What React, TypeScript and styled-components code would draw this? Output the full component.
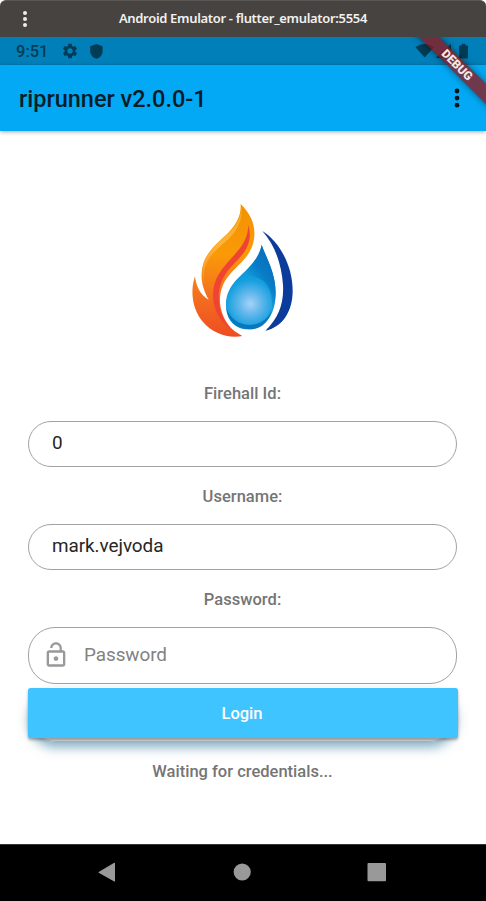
import React from 'react';
import styled, { createGlobalStyle } from 'styled-components';

const GlobalStyle = createGlobalStyle`
  * { box-sizing: border-box; }
  html, body { margin: 0; padding: 0; background: #fff; }
  body { font-family: Roboto, "Liberation Sans", sans-serif; }
  button, input { font: inherit; }
`;

const Window = styled.div`
  width: 486px;
  height: 901px;
  display: flex;
  flex-direction: column;
  overflow: hidden;
  background: #fff;
`;

const TitleBar = styled.header`
  height: 37px;
  flex: none;
  display: grid;
  grid-template-columns: 50px 1fr 50px;
  align-items: center;
  justify-items: center;
  background: #474340;
  border-top: 1px solid #5b5754;
  border-radius: 6px 6px 0 0;
`;

const WindowTitle = styled.h1`
  margin: 0 0 2px;
  color: #f2f1ef;
  font: 600 13px/18px "Noto Sans", sans-serif;
  letter-spacing: -0.32px;
  white-space: nowrap;
`;

const Screen = styled.div`
  position: relative;
  flex: 1;
  min-height: 0;
  display: flex;
  flex-direction: column;
  overflow: hidden;
`;

const StatusBar = styled.div`
  height: 28px;
  flex: none;
  display: flex;
  align-items: center;
  justify-content: space-between;
  padding: 0 17px 0 16px;
  background: #017fb9;
  color: #023c56;
`;

const StatusGroup = styled.div`
  display: flex;
  align-items: center;
`;

const Clock = styled.span`
  width: 45px;
  padding-top: 1px;
  font-size: 16.5px;
  font-weight: 500;
  line-height: 28px;
`;

const AppBar = styled.div`
  height: 66px;
  flex: none;
  display: flex;
  align-items: center;
  justify-content: space-between;
  padding: 1px 26px 0 19px;
  background: #03a9f4;
  box-shadow: 0 1px 4px rgba(0, 0, 0, 0.35);
`;

const AppTitle = styled.h2`
  margin: 0;
  color: #061d29;
  font-size: 23.5px;
  font-weight: 500;
  letter-spacing: -0.02px;
`;

const DebugBanner = styled.div`
  position: absolute;
  top: 21px;
  left: 377px;
  width: 160px;
  height: 14px;
  transform: rotate(45deg);
  background: rgba(146, 22, 25, 0.77);
  box-shadow: 0 0 7px rgba(0, 0, 0, 0.5);
  color: #f1e6e8;
  font-size: 12px;
  font-weight: 900;
  line-height: 14px;
  letter-spacing: -0.05px;
  text-align: center;
`;

const Form = styled.main`
  flex: 1;
  display: flex;
  flex-direction: column;
  align-items: center;
  padding: 64px 29px 0 28px;
`;

const Label = styled.label`
  height: 20px;
  margin-top: 1px;
  margin-bottom: 17px;
  color: #757575;
  font-size: 16.5px;
  font-weight: 500;
  line-height: 20px;
  letter-spacing: 0.03px;
`;

const Field = styled.div<{ $tall?: boolean }>`
  width: 100%;
  height: ${(p) => (p.$tall ? 57 : 46)}px;
  flex: none;
  display: flex;
  align-items: center;
  margin-bottom: ${(p) => (p.$tall ? 3 : 19)}px;
  padding: 0 ${(p) => (p.$tall ? '13px 2px' : '23px 3px')};
  gap: 14px;
  border: 1.2px solid #a2a2a2;
  border-radius: ${(p) => (p.$tall ? 27 : 23)}px;
`;

const Input = styled.input`
  flex: 1;
  min-width: 0;
  padding: 0;
  border: 0;
  outline: 0;
  background: transparent;
  color: #262626;
  font-size: 18.9px;
  letter-spacing: -0.06px;
  &::placeholder { color: #828282; opacity: 1; }
`;

const ButtonShell = styled.div`
  width: 100%;
  height: 55px;
  flex: none;
  padding-top: 1px;
  border-radius: 28px;
  border-bottom: 1px solid #a9b8bf;
  background: linear-gradient(#fff 50%, #dadada 50%);
  box-shadow: 0 6px 12px -1px rgba(1, 87, 135, 0.5);
`;

const LoginButton = styled.button`
  display: block;
  width: 430px;
  height: 50px;
  padding: 0 2px 0 0;
  border: 0;
  border-radius: 2.5px;
  background: #40c4ff;
  box-shadow: 0 2px 3px rgba(0, 0, 0, 0.32);
  color: #fff;
  font-size: 16.5px;
  font-weight: 500;
`;

const Status = styled.p`
  height: 20px;
  margin: 20px 0 0;
  color: #757575;
  font-size: 16.5px;
  font-weight: 500;
  line-height: 20px;
`;

const NavBar = styled.nav`
  height: 57px;
  flex: none;
  display: grid;
  grid-template-columns: 24px 24px 24px;
  justify-content: center;
  column-gap: 110.5px;
  align-items: center;
  padding: 0 2px 2px 0;
  background: #000;
  border-top: 1px solid #333;
`;

const Dots = ({ color, size, gap }: { color: string; size: number; gap: number }) => (
  <svg width={6} height={gap * 2 + 6} fill={color}>
    {[0, 1, 2].map((i) => (
      <circle key={i} cx={3} cy={3 + i * gap} r={size} />
    ))}
  </svg>
);

const Logo = styled.svg`
  width: 125px;
  height: 150px;
  flex: none;
  display: block;
  margin-bottom: 38px;
`;

const FlameLogo = () => (
  <Logo viewBox="0 0 375 450">
    <defs>
      <linearGradient id="flame" x1="0" y1="0" x2="0" y2="1">
        <stop offset="0" stopColor="#f29200" />
        <stop offset=".38" stopColor="#fa9a08" />
        <stop offset=".68" stopColor="#f4711f" />
        <stop offset="1" stopColor="#ee4c22" />
      </linearGradient>
      <linearGradient id="glint" x1="0" y1="0" x2="0" y2="1">
        <stop offset="0" stopColor="#f9a51c" />
        <stop offset=".5" stopColor="#fdb53a" />
        <stop offset="1" stopColor="#f7912b" />
      </linearGradient>
      <radialGradient id="drop" gradientUnits="userSpaceOnUse" cx="211" cy="326" r="150">
        <stop offset="0" stopColor="#a5d3f7" />
        <stop offset=".22" stopColor="#62b7ec" />
        <stop offset=".48" stopColor="#149fde" />
        <stop offset="1" stopColor="#0a86cf" />
      </radialGradient>
      <linearGradient id="shade" gradientUnits="userSpaceOnUse" x1="215" y1="262" x2="274" y2="222">
        <stop offset="0" stopColor="#0877c3" stopOpacity="0" />
        <stop offset=".6" stopColor="#0877c3" stopOpacity=".85" />
        <stop offset="1" stopColor="#0874bf" />
      </linearGradient>
    </defs>
    <path fill="url(#flame)" d="M182 27C213 57 228 92 222 132C215 184 174 208 146 242C112 284 111 342 144 388C155 404 170 414 187 423C145 431 97 415 69 381C38 345 29 290 45 244C48 270 58 298 86 314C69 284 60 250 67 218C77 171 112 144 142 116C169 90 184 62 182 27Z" />
    <path fill="url(#glint)" d="M183 31C190 66 177 101 149 128C117 158 83 181 75 219C70 240 71 252 73 264C64 237 66 211 75 192C94 157 127 135 154 106C176 83 184 60 183 31Z" />
    <path fill="#f04432" d="M205 91C219 139 198 170 164 204C135 233 117 263 116 303C115 345 132 383 155 405C120 382 99 344 99 300C100 251 125 222 154 190C187 154 203 132 205 91Z" />
    <path fill="url(#drop)" d="M245 150C260 192 287 234 287 294C287 353 262 393 218 402C172 409 139 380 138 332C137 282 167 255 197 227C223 202 239 179 245 150Z" />
    <path fill="url(#shade)" d="M245 150C260 192 287 234 287 294C286 318 281 342 274 357C281 310 272 268 240 252C224 244 204 240 184 239C215 214 238 185 245 150Z" />
    <path fill="#0778bf" d="M139 340C151 370 175 389 207 390C239 390 262 373 277 345C263 387 241 403 207 403C168 401 143 379 139 340Z" />
    <path fill="#0c3c9b" d="M247 108C303 143 338 218 338 287C338 350 306 397 256 407C296 369 312 324 309 270C305 210 286 151 247 108Z" />
  </Logo>
);

const GearIcon = styled.svg`
  width: 18px;
  height: 18px;
  margin: 0 8px 0 0;
  fill: currentColor;
`;

const StatusIcon = styled.svg`
  height: 17px;
  display: block;
  fill: currentColor;
`;

export default function App() {
  return (
    <Window>
      <GlobalStyle />
      <TitleBar>
        <Dots color="#eeedeb" size={2} gap={6} />
        <WindowTitle>Android Emulator - flutter_emulator:5554</WindowTitle>
      </TitleBar>
      <Screen>
        <StatusBar>
          <StatusGroup>
            <Clock>9:51</Clock>
            <GearIcon viewBox="0 0 24 24">
              <path d="M19.14 12.94c.04-.3.06-.61.06-.94s-.02-.64-.07-.94l2.03-1.58a.49.49 0 0 0 .12-.61l-1.92-3.32a.49.49 0 0 0-.59-.22l-2.39.96a7 7 0 0 0-1.62-.94L14.4 2.81a.48.48 0 0 0-.48-.41h-3.84a.48.48 0 0 0-.47.41l-.36 2.54c-.59.24-1.13.57-1.62.94l-2.39-.96a.49.49 0 0 0-.59.22L2.73 8.87a.48.48 0 0 0 .12.61l2.03 1.58a7.5 7.5 0 0 0 0 1.88l-2.03 1.58a.49.49 0 0 0-.12.61l1.92 3.32c.12.22.37.29.59.22l2.39-.96c.5.38 1.03.7 1.62.94l.36 2.54c.05.24.24.41.48.41h3.84c.24 0 .44-.17.47-.41l.36-2.54a7 7 0 0 0 1.62-.94l2.39.96c.22.08.47 0 .59-.22l1.92-3.32a.48.48 0 0 0-.12-.61zM12 15.6a3.6 3.6 0 1 1 0-7.2 3.6 3.6 0 0 1 0 7.2z" />
            </GearIcon>
            <StatusIcon width={18} viewBox="0 0 18 17">
              <path d="M9.4 .9L15.6 3.2V8C15.6 11.8 12.9 14.8 9.4 15.8C5.9 14.8 3.2 11.8 3.2 8V3.2Z" />
            </StatusIcon>
          </StatusGroup>
          <StatusIcon width={54} viewBox="0 0 54 17">
            <path d="M0.5 4.3C6.2 -.1 13.1 -.1 18.8 4.3L9.7 14.5Z" />
            <path d="M21.5 15V14L36 1V15Z" />
            <path d="M46.7 .7h3.7v1.7h1.8q.8 0 .8.8V14.6q0 .9-.9.9h-7.1q-.9 0-.9-.9V3.2q0-.8.8-.8h1.8Z" />
          </StatusIcon>
        </StatusBar>
        <AppBar>
          <AppTitle>riprunner v2.0.0-1</AppTitle>
          <Dots color="#07141b" size={2.4} gap={7.1} />
        </AppBar>
        <Form>
          <FlameLogo />
          <Label htmlFor="firehall">Firehall Id:</Label>
          <Field>
            <Input id="firehall" defaultValue="0" />
          </Field>
          <Label htmlFor="username">Username:</Label>
          <Field>
            <Input id="username" defaultValue="mark.vejvoda" />
          </Field>
          <Label htmlFor="password">Password:</Label>
          <Field $tall>
            <svg width={28} height={28} viewBox="0 0 24 24" fill="#999">
              <path d="M12 17c1.1 0 2-.9 2-2s-.9-2-2-2-2 .9-2 2 .9 2 2 2zm6-9h-1V6c0-2.76-2.24-5-5-5S7 3.24 7 6h1.9c0-1.71 1.39-3.1 3.1-3.1s3.1 1.39 3.1 3.1v2H6c-1.1 0-2 .9-2 2v10c0 1.1.9 2 2 2h12c1.1 0 2-.9 2-2V10c0-1.1-.9-2-2-2zm0 12H6V10h12v10z" />
            </svg>
            <Input id="password" type="password" placeholder="Password" />
          </Field>
          <ButtonShell>
            <LoginButton>Login</LoginButton>
          </ButtonShell>
          <Status>Waiting for credentials...</Status>
        </Form>
        <NavBar>
          <svg width={24} height={24} fill="#999">
            <path d="M2.7 12L17.8 3Q19 2.4 19 3.3V21.2Q19 22 17.8 21.3L2.7 12.7Q2 12.3 2.7 12Z" />
          </svg>
          <svg width={24} height={24} fill="#999">
            <circle cx={12.2} cy={12} r={8.6} />
          </svg>
          <svg width={24} height={24} fill="#999">
            <rect x={2.5} y={3} width={18.5} height={18.3} rx={1} />
          </svg>
        </NavBar>
        <DebugBanner>DEBUG</DebugBanner>
      </Screen>
    </Window>
  );
}
